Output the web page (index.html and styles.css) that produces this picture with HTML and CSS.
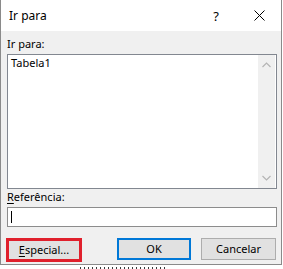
FILE: index.html
```html
<!DOCTYPE html>
<html lang="pt">
<head>
<meta charset="UTF-8">
<meta name="viewport" content="width=device-width, initial-scale=1.0">
<title>Ir para</title>
<link rel="stylesheet" href="styles.css">
</head>
<body>
<div class="dialog">
  <div class="titlebar">
    <span class="title">Ir para</span>
    <span class="help">?</span>
    <svg class="close" width="11" height="11" viewBox="0 0 11 11">
      <path d="M0.5 0.5 L10.5 10.5 M10.5 0.5 L0.5 10.5" stroke="#000" stroke-width="1" fill="none"/>
    </svg>
  </div>
  <div class="content">
    <label class="field-label">Ir para:</label>
    <div class="listbox">
      <div class="items">
        <div class="item">Tabela1</div>
      </div>
      <div class="scrollbar">
        <svg width="9" height="6" viewBox="0 0 9 6">
          <path d="M0.5 5 L4.5 1 L8.5 5" stroke="#b4b4b4" stroke-width="1.2" fill="none"/>
        </svg>
        <svg width="9" height="6" viewBox="0 0 9 6">
          <path d="M0.5 1 L4.5 5 L8.5 1" stroke="#b4b4b4" stroke-width="1.2" fill="none"/>
        </svg>
      </div>
    </div>
    <label class="field-label ref-label"><u>R</u>eferência:</label>
    <div class="textbox"><span class="caret"></span></div>
    <div class="buttons">
      <button type="button" class="btn special"><u>E</u>special...</button>
      <button type="button" class="btn default">OK</button>
      <button type="button" class="btn cancel">Cancelar</button>
    </div>
  </div>
</div>
<div class="behind"></div>
</body>
</html>
```

FILE: styles.css
```css
body {
  margin: 0;
  background-color: #fff;
  font-family: "Noto Sans", sans-serif;
  font-size: 11px;
  color: #000;
}

.dialog {
  width: 282px;
  height: 265px;
  box-sizing: border-box;
  border: 1px solid #8a8a8a;
  border-top: none;
  background-color: #f0f0f0;
  display: flex;
  flex-direction: column;
}

.titlebar {
  height: 31px;
  flex-shrink: 0;
  background-color: #fff;
  display: flex;
  align-items: center;
  padding-right: 16px;
}

.title {
  padding-left: 8px;
  font-size: 12px;
}

.help {
  margin-left: auto;
  margin-right: 35px;
  font-size: 13px;
}

.close {
  display: block;
}

.content {
  padding: 5px 4px 0 6px;
}

.field-label {
  display: block;
  line-height: 16px;
  margin-bottom: 2px;
}

.listbox {
  height: 135px;
  box-sizing: border-box;
  border: 1px solid #828790;
  background-color: #fff;
  display: flex;
}

.items {
  flex: 1;
  padding-left: 3px;
}

.item {
  line-height: 15px;
}

.scrollbar {
  width: 17px;
  margin-right: 1px;
  background-color: #f0f0f0;
  display: flex;
  flex-direction: column;
  justify-content: space-between;
  align-items: center;
  padding: 7px 0 7px;
}

.scrollbar svg {
  display: block;
}

.ref-label u,
.btn u {
  text-decoration-thickness: 1px;
  text-underline-offset: 2px;
}

.textbox {
  height: 20px;
  box-sizing: border-box;
  border: 1px solid #8c8c8c;
  background-color: #fff;
  display: flex;
  align-items: center;
  padding-left: 3px;
}

.caret {
  width: 1px;
  height: 12px;
  background-color: #000;
}

.buttons {
  display: flex;
  align-items: flex-start;
  margin-top: 11px;
  margin-right: 1px;
}

.btn {
  font-family: "Noto Sans", sans-serif;
  font-size: 11px;
  color: #000;
  background-color: #e1e1e1;
  border: 1px solid #adadad;
  height: 22px;
  padding: 0;
  box-sizing: border-box;
  line-height: 18px;
}

.special {
  width: 76px;
  height: 24px;
  margin-left: -1px;
  border: 3px solid #e0202c;
}

.default {
  width: 74px;
  margin-left: auto;
  border: 2px solid #0078d7;
}

.cancel {
  width: 75px;
  margin-left: 10px;
}

/* tops of the sheet's text peeking out under the dialog */
.behind {
  width: 86px;
  height: 2px;
  margin: 2px 0 0 80px;
  background: repeating-linear-gradient(90deg, #3a3a3a 0 1px, transparent 1px 4px, #3a3a3a 4px 5px, transparent 5px 8px);
}
```
